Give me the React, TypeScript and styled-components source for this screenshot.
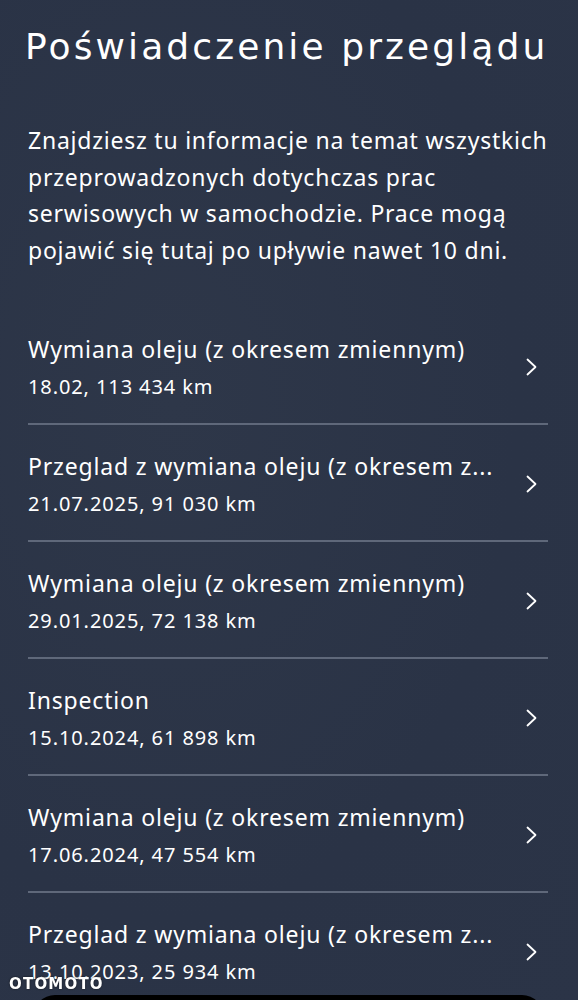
import React from 'react'
import styled, { createGlobalStyle } from 'styled-components'

const GlobalStyle = createGlobalStyle`
  html, body {
    margin: 0;
    padding: 0;
    background: #2b3447;
  }
  body {
    font-family: "Noto Sans", Roboto, sans-serif;
    color: #ffffff;
    overflow: hidden;
  }
`

const Page = styled.div`
  min-height: 1000px;
  padding: 0 30px 0 28px;
  background: radial-gradient(ellipse at 30% 40%, #2e3749 0%, #2a3346 60%, #2b3447 100%);
`

const Title = styled.h1`
  margin: 0 0 0 -3px;
  padding: 25px 0 0 0;
  font-family: "DejaVu Sans", Lato, sans-serif;
  font-weight: 400;
  font-size: 36px;
  line-height: 44px;
  letter-spacing: 3.1px;
  white-space: nowrap;
`

const Intro = styled.p`
  margin: 53px 0 0 0;
  font-size: 23px;
  line-height: 36.5px;
  letter-spacing: 0.77px;
  white-space: nowrap;
`

const List = styled.ul`
  list-style: none;
  margin: 40px 0 0 0;
  padding: 0;
`

const Row = styled.li`
  display: flex;
  align-items: center;
  justify-content: space-between;
  padding: 23px 0 21px 0;
  border-bottom: 2px solid #5f687a;
`

const RowText = styled.div`
  display: flex;
  flex-direction: column;
  min-width: 0;
`

const RowTitle = styled.div`
  font-size: 23px;
  line-height: 36px;
  letter-spacing: 0.83px;
  white-space: nowrap;
`

const RowMeta = styled.div`
  margin-top: 5px;
  font-size: 20px;
  line-height: 30px;
  letter-spacing: 0.9px;
`

const Chevron = styled.svg`
  flex: none;
  width: 11px;
  height: 18px;
  margin-right: 11px;
`

const BottomSheet = styled.div`
  position: fixed;
  left: 33px;
  right: 34px;
  bottom: -40px;
  height: 45px;
  background: #000;
  border-radius: 22px 22px 0 0;
`

const Watermark = styled.div`
  position: fixed;
  left: 9px;
  top: 975px;
  font-family: "DejaVu Sans", sans-serif;
  font-weight: 700;
  font-size: 15px;
  letter-spacing: 1.2px;
  color: #fff;
  text-shadow: 0 0 2px rgba(0, 0, 0, 0.7);
`

const entries = [
  { title: 'Wymiana oleju (z okresem zmiennym)', meta: '18.02, 113 434 km' },
  { title: 'Przeglad z wymiana oleju (z okresem z...', meta: '21.07.2025, 91 030 km' },
  { title: 'Wymiana oleju (z okresem zmiennym)', meta: '29.01.2025, 72 138 km' },
  { title: 'Inspection', meta: '15.10.2024, 61 898 km' },
  { title: 'Wymiana oleju (z okresem zmiennym)', meta: '17.06.2024, 47 554 km' },
  { title: 'Przeglad z wymiana oleju (z okresem z...', meta: '13.10.2023, 25 934 km' },
]

const App: React.FC = () => {
  return (
    <>
      <GlobalStyle />
      <Page>
        <Title>Poświadczenie przeglądu</Title>
        <Intro>
          Znajdziesz tu informacje na temat wszystkich
          <br />
          przeprowadzonych dotychczas prac
          <br />
          serwisowych w samochodzie. Prace mogą
          <br />
          pojawić się tutaj po upływie nawet 10 dni.
        </Intro>
        <List>
          {entries.map((e, i) => (
            <Row key={i}>
              <RowText>
                <RowTitle>{e.title}</RowTitle>
                <RowMeta>{e.meta}</RowMeta>
              </RowText>
              <Chevron viewBox="0 0 11 18" fill="none">
                <polyline points="1.5,1.5 9.5,9 1.5,16.5" stroke="#fff" strokeWidth="1.8" strokeLinecap="round" strokeLinejoin="round" />
              </Chevron>
            </Row>
          ))}
        </List>
      </Page>
      <Watermark>OTOMOTO</Watermark>
      <BottomSheet />
    </>
  )
}

export default App
